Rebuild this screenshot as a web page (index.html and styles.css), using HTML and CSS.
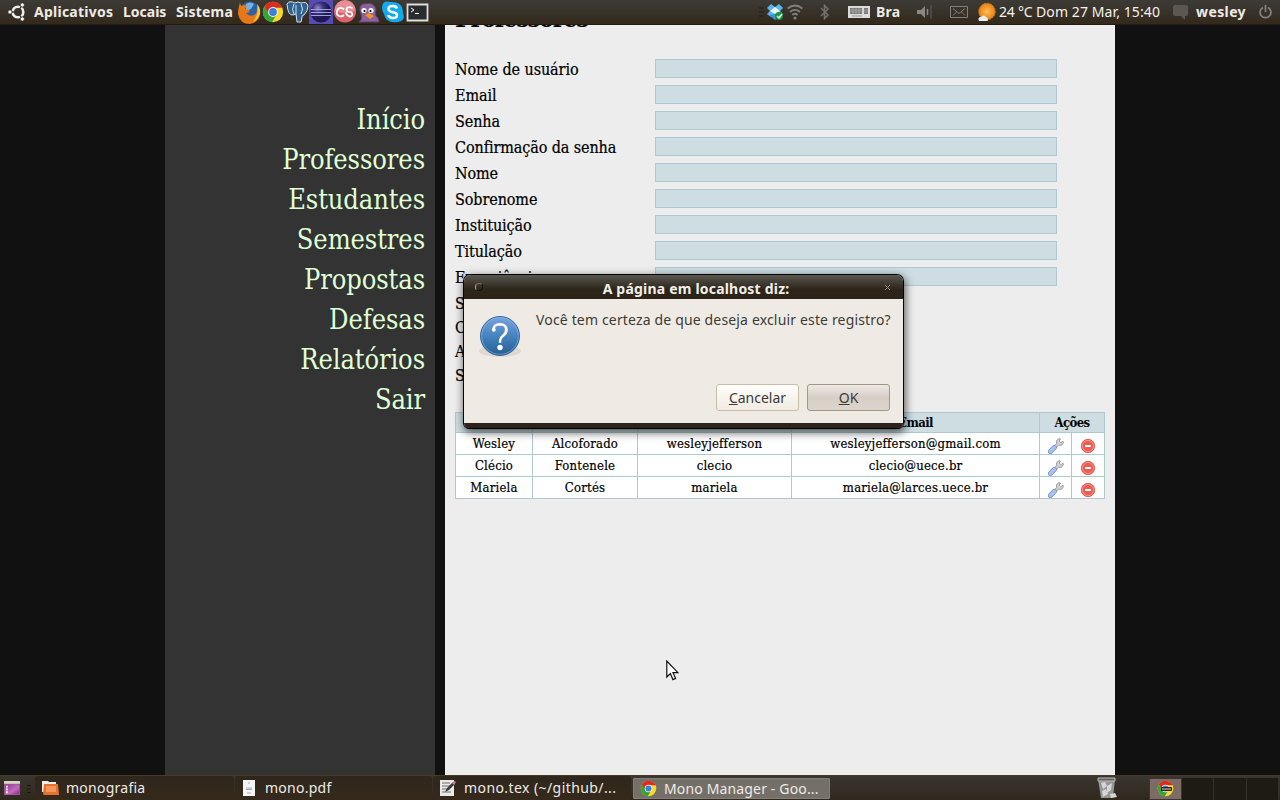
FILE: index.html
```html
<!DOCTYPE html>
<html lang="pt-BR">
<head>
<meta charset="utf-8">
<title>Mono Manager</title>
<link rel="stylesheet" href="styles.css">
</head>
<body>
<svg class="defs" width="0" height="0">
  <defs>
    <linearGradient id="blueball" x2="0" y2="1"><stop stop-color="#7ba4df"/><stop offset=".5" stop-color="#4583bf"/><stop offset="1" stop-color="#245e91"/></linearGradient>
    <linearGradient id="purple" x2="1" y2="1"><stop stop-color="#8c3c8a"/><stop offset=".6" stop-color="#c76bc0"/><stop offset="1" stop-color="#86307f"/></linearGradient>
    <radialGradient id="eclipse" cx=".35" cy=".3"><stop stop-color="#8f8bc6"/><stop offset=".5" stop-color="#3c3480"/><stop offset="1" stop-color="#1e1852"/></radialGradient>
    <radialGradient id="sun"><stop stop-color="#ffc04e"/><stop offset="1" stop-color="#e87d17"/></radialGradient>
    <symbol id="chrome" viewBox="0 0 24 24">
      <circle cx="12" cy="12" r="11" fill="#f9d92c"/>
      <path d="M2.500 6.500A11 11 0 0 1 22.100 7.500L12 7.500 7.700 14.500z" fill="#dc2b20"/>
      <path d="M2.500 6.500A11 11 0 0 0 11 23L16 14.500 8 14.200z" fill="#35a535"/>
      <circle cx="12" cy="12" r="5.300" fill="#f4f4f4"/><circle cx="12" cy="12" r="4.200" fill="#3a7fd8"/>
    </symbol>
    <symbol id="wrench" viewBox="0 0 16 16">
      <path d="M2.400 13.500 6.500 9.300" stroke="#6f8fd6" stroke-width="5" stroke-linecap="round"/>
      <path d="M2.400 13.500 6.500 9.300" stroke="#a9c2f0" stroke-width="3.400" stroke-linecap="round"/>
      <path d="M7 7.300 8.600 5.500V2.500L11 .600 12.600 1 11.200 3 12.800 4.700 15 3.200 15.500 4.700 13.500 7.300H10.500L8.700 9z" fill="#d2d2d2" stroke="#8b8b8b" stroke-width=".8"/>
    </symbol>
    <symbol id="remove" viewBox="0 0 16 16">
      <circle cx="8" cy="8" r="6.700" fill="#ed5d52" stroke="#d9504a" stroke-width=".8"/><circle cx="8" cy="8" r="5.600" fill="none" stroke="#f5a19a" stroke-width=".8"/>
      <path d="M5 8h6" stroke="#fff" stroke-width="2"/>
    </symbol>
  </defs>
</svg>

<header class="panel top">
  <div class="group">
    <svg class="ubuntu" width="18" height="18" viewBox="0 0 18 18"><circle cx="10" cy="9" r="5.300" fill="none" stroke="#eee" stroke-width="2.600"/><path d="M10 9H2M10 9l4-7M10 9l4 7" stroke="#36332d" stroke-width="1.300"/><g fill="#fff" stroke="#36332d" stroke-width=".8"><circle cx="2" cy="9" r="2.100"/><circle cx="14.300" cy="2" r="2.100"/><circle cx="14.300" cy="16" r="2.100"/></g></svg>
    <span class="menu aplicativos">Aplicativos</span><span class="menu locais">Locais</span><span class="menu sistema">Sistema</span>
    <svg class="app" width="24" height="24" viewBox="0 0 24 24"><circle cx="12.500" cy="11.500" r="10" fill="#2863a8"/><path d="M9 4q4-3 8 0l-3 5-5 2z" fill="#72b4df"/><path d="M3 2q0 3 2 4 3-2 5 0L8 9q3 0 5 2-1 2-4 2 3 4 8 2 4-2 3-8 3 2 3 7-1 8-10 10Q3 24 1 14q0-5 2-12z" fill="#e87817"/><path d="M20 4q4 4 3 10-2 6-7 8 6-8 4-18z" fill="#fac238"/></svg>
    <svg class="app" width="24" height="24" viewBox="-1 -1 26 26"><use href="#chrome" width="24" height="24"/></svg>
    <svg class="app" width="24" height="24" viewBox="0 0 24 24"><path d="M2 4Q4 0 10 3q3-2 6 0 6-2 7 3 0 5-4 9-2 0-2 2l-1 5h-4l-1-8-3 1Q3 16 2 4z" fill="#2f6291" stroke="#d5e0e8" stroke-width="1"/><path d="M9 4q-3 6 0 10M16 4q3 5 0 10M11 14V5" fill="none" stroke="#d5e0e8"/></svg>
    <svg class="app" width="24" height="24" viewBox="0 0 24 24"><path d="M0 0h24v24H0z" fill="#564bb3"/><circle cx="12" cy="12" r="10.500" fill="url(#eclipse)"/><path d="M2 9.500h20M2 12.500h20M2 15.500h20" stroke="#a4a0dc" stroke-width="1.200"/></svg>
    <svg class="app" width="24" height="24" viewBox="0 0 24 24"><circle cx="12" cy="11.500" r="11" fill="#d9646e"/><path d="M1.500 10.500a10.500 10.500 0 0 1 21 0q-10 5-21 0z" fill="#e78d93"/><path d="M11 9.500Q8 6.500 5 9q-3 5 1 7 3 1 5-1M19.500 8.500q-2-2-5-1-2 2 0 4l4 1q2 3-1 4-3 0-5-4" fill="none" stroke="#fff" stroke-width="1.800"/></svg>
    <svg class="app" width="24" height="24" viewBox="0 0 24 24"><path d="M2 22q4-3 2-8Q0 4 9 3.500q8-1 10 5.500-1 5 0 7 3 2 3 6z" fill="#8b629b" stroke="#61406f"/><circle cx="7" cy="10.500" r="2.600" fill="#fff"/><circle cx="14" cy="10.500" r="2.600" fill="#fff"/><circle cx="7.500" cy="11" r="1.100"/><circle cx="13.500" cy="11" r="1.100"/><path d="M8 15l4-2 5 3-4 3z" fill="#f79221"/></svg>
    <svg class="app" width="24" height="24" viewBox="0 0 24 24"><path d="M1 7Q2 0 9 2q13-1 13 11 3 8-5 9-12 2-14-8Q1 11 1 7z" fill="#13aaea"/><path d="M16 8.500q-1-2.500-4-2.500-4.500 0-4.500 2.700t4.500 3.500q4 .5 4 3 0 2.800-4.500 2.800-4-.5-4-3" fill="none" stroke="#fff" stroke-width="2.500"/></svg>
    <svg class="app" width="24" height="24" viewBox="0 0 24 24"><path d="M2.500 4.500h20v16h-20z" fill="#292c2e" stroke="#ddd" stroke-width="1.800"/><path d="M6 8l3 2-3 2M10 13.500h4" fill="none" stroke="#fff"/></svg>
  </div>
  <div class="group tray">
    <svg width="5" height="10"><path d="M0 1h5M0 5h5M0 9h5" stroke="#211e18"/></svg>
    <svg class="dropbox" width="17" height="17" viewBox="0 0 17 17"><path d="M4 0l4 3 4-3 4 4-3 3 3 3-4 3-4-3-4 3-4-3 3-3-3-3z" fill="#5ab4f0"/><path d="M8 3l5 4-5 3-5-3z" fill="#e6f5ff"/><path d="M2 11l6-1 4 3-4 3z" fill="#3c91d7"/><circle cx="12" cy="12" r="4" fill="#15963b"/><path d="M10 12l2 2 3-4" fill="none" stroke="#fff" stroke-width="1.300"/></svg>
    <svg class="wifi" width="16" height="16" viewBox="0 0 16 16"><g fill="none" stroke="#817f7a" stroke-width="1.800"><path d="M.6 4.500q7.400-6 14.800 0M3 8q5-4.300 10 0M5.400 11q2.600-2.400 5.200 0"/></g><circle cx="8" cy="14" r="1.600" fill="#817f7a"/></svg>
    <svg class="bluetooth" width="10" height="16" viewBox="0 0 10 16"><path d="M1 4l7 7-3.500 3.500v-13L8 5l-7 7" fill="none" stroke="#74716b" stroke-width="1.500"/></svg>
    <svg class="keyboard" width="22" height="14" viewBox="0 0 22 14"><path d="M0 1h22v12H0z" fill="#dcdcda"/><path d="M2 3h12v6H2zM16 3h4v6h-4z" fill="#777"/><path d="M4 11h10" stroke="#999"/><path d="M2 5h18M2 7h18M5 2v7M8 2v7M11 2v7" stroke="#bbb" stroke-width=".6"/></svg>
    <span class="menu bra">Bra</span>
    <svg class="speaker" width="15" height="14" viewBox="0 0 15 14"><path d="M0 5h4l4-4v12L4 9H0z" fill="#8a8883"/><path d="M10.500 4v6" stroke="#8a8883" stroke-width="1.500"/><path d="M14 0v14" stroke="#55524c" stroke-width="1.500"/></svg>
    <svg class="mail" width="18" height="12" viewBox="0 0 18 12"><path d="M.5.5h17v11H.5zM3 2.500l6 5 6-5M3 9.500l3.500-3.500M15 9.500 11.500 6" fill="none" stroke="#817f7a"/></svg>
    <svg class="weather" width="19" height="20" viewBox="0 0 19 20"><circle cx="10" cy="9.500" r="8.300" fill="url(#sun)" stroke="#c97717" stroke-dasharray="2 1"/><path d="M2 19q-2-4 3-4.500 1.500-2 4 .5 3 1 1.500 4z" fill="#ececea"/></svg>
    <span class="clock temp">24 °C</span><span class="clock date">Dom 27 Mar, 15:40</span>
    <svg class="bubble" width="15" height="15" viewBox="0 0 15 15"><path d="M2 0h11q2 0 2 2v7q0 2-2 2h-1v4l-4-4H2q-2 0-2-2V2q0-2 2-2z" fill="#5b5852"/></svg>
    <span class="menu wesley">wesley</span>
    <svg class="power" width="13" height="14" viewBox="0 0 13 14"><path d="M4 2.500a5.400 5.400 0 1 0 5 0M6.500 0v7" fill="none" stroke="#85827d" stroke-width="1.700"/></svg>
  </div>
</header>

<div class="desktop">
  <nav class="sidebar">
    <a>Início</a><a>Professores</a><a>Estudantes</a><a>Semestres</a><a>Propostas</a><a>Defesas</a><a>Relatórios</a><a>Sair</a>
  </nav>
  <main class="content">
    <h1>Professores</h1>
    <form class="form">
      <label>Nome de usuário</label><span class="input"></span>
      <label>Email</label><span class="input"></span>
      <label>Senha</label><span class="input"></span>
      <label>Confirmação da senha</label><span class="input"></span>
      <label>Nome</label><span class="input"></span>
      <label>Sobrenome</label><span class="input"></span>
      <label>Instituição</label><span class="input"></span>
      <label>Titulação</label><span class="input"></span>
      <label>Experiência</label><span class="input"></span>
    </form>
    <div class="options"><span>S</span><span>C</span><span>A</span><span>S</span></div>
    <div class="table">
      <b></b><b></b><b></b><b>Email</b><b class="wide">Ações</b>
      <span>Wesley</span><span>Alcoforado</span><span>wesleyjefferson</span><span>wesleyjefferson@gmail.com</span><i><svg width="16" height="16"><use href="#wrench"/></svg></i><i><svg width="16" height="16"><use href="#remove"/></svg></i>
      <span>Clécio</span><span>Fontenele</span><span>clecio</span><span>clecio@uece.br</span><i><svg width="16" height="16"><use href="#wrench"/></svg></i><i><svg width="16" height="16"><use href="#remove"/></svg></i>
      <span>Mariela</span><span>Cortés</span><span>mariela</span><span>mariela@larces.uece.br</span><i><svg width="16" height="16"><use href="#wrench"/></svg></i><i><svg width="16" height="16"><use href="#remove"/></svg></i>
    </div>
  </main>
</div>

<footer class="panel bottom">
  <svg class="show" width="16" height="14" viewBox="0 0 17 15"><path d="M0 0h17v15H0z" fill="#a8559f"/><path d="M1 4h15v10H1z" fill="url(#purple)"/><path d="M0 0h17v3H0z" fill="#d9d8c4"/><path d="M3 5v8" stroke="#fff" stroke-width="2" stroke-dasharray="2 1"/></svg>
  <svg class="grip" width="4" height="8"><path d="M0 .5h4M0 4h4M0 7.500h4" stroke="#181613"/></svg>
  <div class="task t1"><svg width="17" height="16" viewBox="0 0 17 16"><path d="M0 1h6l1 1h7v10H0z" fill="#efede9"/><path d="M1 14 2 4h14l1 11H2z" fill="#e5712f"/><path d="M4 6h10v6H4z" fill="#f1955a"/></svg><span>monografia</span></div>
  <div class="task t2"><svg width="12" height="16" viewBox="0 0 12 16"><path d="M0 0h12v16H0z" fill="#f5f5f5"/><path d="M5 3h2M3 8h6M3 9.500h6M4 13h4" stroke="#aaa"/></svg><span>mono.pdf</span></div>
  <div class="task t3"><svg width="17" height="16" viewBox="0 0 17 16"><path d="M0 0h14v16H0z" fill="#e9e9e7"/><path d="M2 3h8M2 6h8M2 9h6M2 12h9" stroke="#6d6d69"/><path d="M5 12l2-4 6-6 2 2-6 6z" fill="#383838"/><path d="M12 3l2-2 2 1-2 3z" fill="#d87c9c"/></svg><span>mono.tex (~/github/...</span></div>
  <div class="task active"><svg width="17" height="17"><use href="#chrome"/></svg><span>Mono Manager - Goo...</span></div>
  <svg class="trash" width="21" height="22" viewBox="0 0 21 22"><path d="M1 2h17l-2 19H4z" fill="#969696"/><path d="M1 1h17v3H1z" fill="#626262" stroke="#bbb"/><path d="M4 6l4-1 2 4-4 3zM10 9l5-3-1 7-4 3zM5 14l4-2 2 5-5 3zM13 17l5-1 2 4-6 1z" fill="#d6d6d6"/></svg>
  <div class="spaces"><div class="space on"><svg width="17" height="17"><use href="#chrome"/><path d="M4.500 7.500h10v3h-10z" fill="#8b7771" stroke="#2c211e"/></svg></div><div class="space"></div><div class="space"></div><div class="space"></div></div>
</footer>

<section class="dialog">
  <div class="titlebar"><span class="dot"></span><strong>A página em localhost diz:</strong><svg width="7" height="7" viewBox="0 0 7 7"><path d="M1 1l5 5M6 1 1 6" stroke="#8e8b84"/></svg></div>
  <div class="message">
    <svg width="44" height="44" viewBox="0 0 44 44"><ellipse cx="22" cy="37" rx="21" ry="6" fill="#7d746b" opacity=".14"/><circle cx="22" cy="22" r="19.500" fill="url(#blueball)" stroke="#356ba1"/><circle cx="22" cy="22" r="18.300" fill="none" stroke="#92b9de" stroke-width=".8" opacity=".7"/><path d="M15.500 15.500q.2-5 6.300-5.200 7 .2 6.800 5.900-.3 3.200-3.500 5.500-3.300 2.400-3.100 7" fill="none" stroke="#fff" stroke-width="2.500"/><path d="M27.800 13v6l-3 3" fill="none" stroke="#fff" stroke-width="2"/><circle cx="15.800" cy="15.800" r="1.900" fill="#fff"/><circle cx="22" cy="33.500" r="2.700" fill="#fff"/></svg>
    <p>Você tem certeza de que deseja excluir este registro?</p>
  </div>
  <div class="buttons"><button class="cancel"><u>C</u>ancelar</button><button class="ok"><u>O</u>K</button></div>
</section>

<svg class="cursor" width="13" height="21" viewBox="0 0 13 21"><path d="M.8 1v16l3.600-3.400 2.500 6 2.700-1.200-2.600-5.700h5z" fill="#fff" stroke="#111" stroke-width="1.200"/></svg>
</body>
</html>
```
FILE: styles.css
```css
* { box-sizing: border-box; }
body {
  margin: 0;
  width: 1280px;
  height: 800px;
  overflow: hidden;
  display: grid;
  grid-template-rows: 25px 750px 25px;
  background: #111;
  font-family: "Noto Sans", sans-serif;
}
svg { display: block; flex: none; }
.defs { position: absolute; }
span, strong, p, label { white-space: nowrap; }

.panel {
  display: flex;
  align-items: center;
  background: linear-gradient(#3d3b36, #33291c);
  color: #eeebe5;
  font-size: 14px;
}
.top { justify-content: space-between; border-bottom: 1px solid #241b10; z-index: 1; }
.group { display: flex; align-items: center; height: 24px; line-height: 24px; }
.menu { font-weight: 700; letter-spacing: .25px; }
.ubuntu { margin: 0 8px 0 8px; }
.aplicativos { width: 89px; }
.locais { width: 53px; letter-spacing: 0; }
.sistema { width: 61px; }
.bra { width: 41px; margin-left: 6px; }
.dropbox { margin-left: 3px; }
.wifi { margin-left: 3px; }
.bluetooth { margin-left: 17px; }
.keyboard { margin-left: 18px; }
.speaker { margin-right: 18px; }
.weather { margin: 0 3px 0 9px; }
.temp { width: 37px; letter-spacing: -.2px; }
.date { width: 137px; letter-spacing: .1px; }
.clock { color: #f4f2ed; }
.wesley { width: 63px; margin-left: 8px; letter-spacing: .4px; }
.power { margin-right: 8px; }

.desktop { display: flex; gap: 10px; padding-left: 165px; overflow: hidden; font-family: "DejaVu Serif Condensed", "DejaVu Serif", serif; font-stretch: condensed; }
.sidebar { width: 270px; background: #333; padding: 75px 10px 0 0; display: flex; flex-direction: column; }
.sidebar a { height: 40px; line-height: 40px; text-align: right; color: #dfffd5; font-size: 27px; letter-spacing: -.1px; }
.content { width: 670px; background: #ededed; padding: 0 10px; overflow: hidden; color: #000; }
h1 { margin: -24px 0 0; height: 55px; line-height: 36px; font-size: 25px; letter-spacing: -1.3px; }
.form { display: grid; grid-template-columns: 200px 402px; grid-auto-rows: 26px; font-size: 16px; letter-spacing: -.1px; -webkit-text-stroke: .2px #000; }
.form label { line-height: 27px; }
.input { height: 19px; margin-top: 3px; background: #cddde2; border: 1px solid #aecad0; }
.options { display: grid; grid-auto-rows: 24px; line-height: 24px; font-size: 16px; padding-top: 2px; height: 122px; -webkit-text-stroke: .2px #000; }
.table {
  display: grid;
  grid-template-columns: 77px 105px 154px 248px 32px 33px;
  grid-template-rows: 20px repeat(3, 22px);
  border-left: 1px solid #aecad0;
  border-top: 1px solid #aecad0;
  font-size: 13px;
  letter-spacing: .2px;
  text-align: center;
}
.table > * { border-right: 1px solid #aecad0; border-bottom: 1px solid #aecad0; background: #fff; line-height: 21px; }
.table > span { -webkit-text-stroke: .2px #000; }
.table > b { background: #cddde2; line-height: 20px; letter-spacing: -.6px; }
.wide { grid-column: span 2; }
.table > i { display: flex; justify-content: center; padding-top: 5px; }

.dialog {
  position: absolute;
  left: 463px;
  top: 274px;
  width: 441px;
  height: 155px;
  border: 1px solid #050505;
  border-radius: 7px 7px 6px 6px;
  background: #efebe4;
  border-bottom: 0;
  box-shadow: 1px 3px 10px rgba(0,0,0,.7);
  display: flex;
  flex-direction: column;
  overflow: hidden;
  z-index: 2;
}
.dialog::after { content: ""; flex: none; height: 5px; background: #2c241a; border-bottom: 1px solid #000; }
.titlebar { flex: none; height: 24px; background: linear-gradient(#595650, #2c251a 60%, #2c2319); display: flex; align-items: center; justify-content: space-between; padding: 0 12px 0 11px; color: #f2efe8; font-size: 14px; }
.titlebar strong { padding: 4px 0 0 25px; line-height: 20px; letter-spacing: .2px; }
.dot { width: 8px; height: 8px; border-radius: 50%; border: 1px solid #15120c; border-left-color: #aaa69f; border-top-color: #77736c; }
.message { display: flex; padding: 15px 0 0 14px; height: 86px; color: #3c3b37; font-size: 14px; }
.message p { margin: -5px 0 0 14px; line-height: 22px; letter-spacing: .16px; }
.buttons { flex: 1; display: flex; justify-content: flex-end; gap: 8px; padding-right: 13px; }
button { width: 83px; height: 27px; margin-top: -1px; padding: 0; border: 1px solid #c9bda5; border-radius: 3px; background: linear-gradient(#fffefc, #f0ebe2); color: #3c3b37; font: 14px/24px "Noto Sans", sans-serif; }
.ok { background: linear-gradient(#eee9e4, #d7cec6 50%, #ddd4cd); border-color: #a39780; }

.bottom { font-size: 14px; border-top: 1px solid #4b3823; background: linear-gradient(#393630, #30281d); align-items: stretch; }
.show { margin: 5px 7px 0 4px; }
.grip { margin: 9px 4px 0 0; }
.task { display: flex; gap: 7px; line-height: 23px; background: linear-gradient(#2e271e, #35291b); border-radius: 3px; white-space: nowrap; overflow: hidden; letter-spacing: .25px; }
.task svg { margin-top: 4px; }
.t1 { width: 199px; padding-left: 7px; margin-right: 1px; }
.t2 { width: 197px; padding-left: 8px; gap: 10px; margin-right: 1px; }
.t3 { width: 198px; padding-left: 7px; gap: 7px; margin-right: 2px; letter-spacing: .42px; }
.active { width: 197px; height: 21px; margin-top: 2px; padding-left: 6px; gap: 7px; background: #746f68; border: 1px solid #857f77; border-radius: 1px; line-height: 19px; letter-spacing: .15px; }
.active svg { margin-top: 1px; }
.trash { margin: 1px 31px 0 267px; }
.spaces { display: grid; grid-template-columns: 33px 32px 33px 32px; height: 22px; margin-top: 2px; background: #1e1a14; }
.space { border-right: 1px solid #373028; }
.space.on { background: #7d6c65; border: 1px solid #3b342f; padding: 1px 7px; }

.cursor { position: absolute; left: 666px; top: 660px; z-index: 3; }
```
